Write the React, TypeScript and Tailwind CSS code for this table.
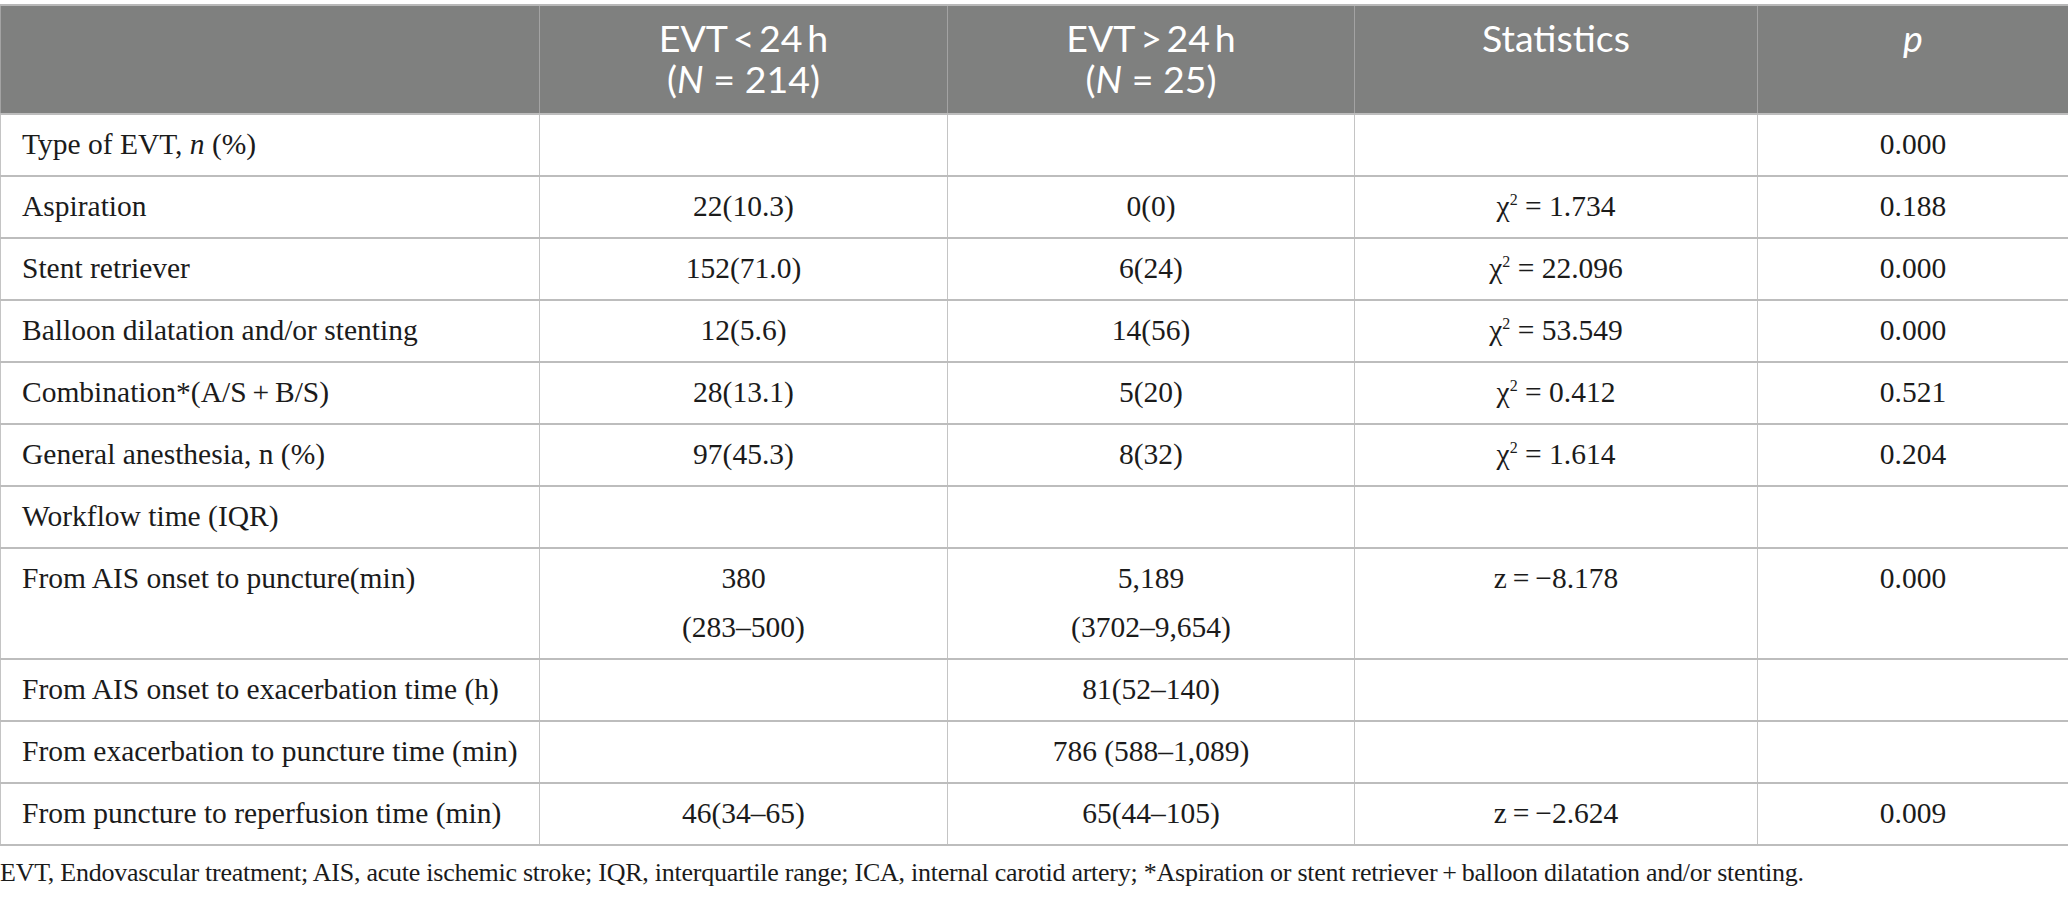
import React from "react";

type Cell = React.ReactNode;

const Chi = ({ v }: { v: string }) => (
  <span>
    χ<sup className="text-[16px] -top-[0.7em]">2</sup> = {v}
  </span>
);

const rows: { cells: Cell[]; tall?: boolean }[] = [
  { cells: [<span key="a">Type of EVT, <i>n</i> (%)</span>, "", "", "", "0.000"] },
  { cells: ["Aspiration", "22(10.3)", "0(0)", <Chi key="c" v="1.734" />, "0.188"] },
  { cells: ["Stent retriever", "152(71.0)", "6(24)", <Chi key="c" v="22.096" />, "0.000"] },
  { cells: ["Balloon dilatation and/or stenting", "12(5.6)", "14(56)", <Chi key="c" v="53.549" />, "0.000"] },
  { cells: ["Combination*(A/S\u2009+\u2009B/S)", "28(13.1)", "5(20)", <Chi key="c" v="0.412" />, "0.521"] },
  { cells: ["General anesthesia, n (%)", "97(45.3)", "8(32)", <Chi key="c" v="1.614" />, "0.204"] },
  { cells: ["Workflow time (IQR)", "", "", "", ""] },
  {
    tall: true,
    cells: [
      "From AIS onset to puncture(min)",
      <span key="b" className="block">380<br />(283–500)</span>,
      <span key="c" className="block">5,189<br />(3702–9,654)</span>,
      "z\u2009=\u2009−8.178",
      "0.000",
    ],
  },
  { cells: ["From AIS onset to exacerbation time (h)", "", "81(52–140)", "", ""] },
  { cells: ["From exacerbation to puncture time (min)", "", "786 (588–1,089)", "", ""] },
  { cells: ["From puncture to reperfusion time (min)", "46(34–65)", "65(44–105)", "z\u2009=\u2009−2.624", "0.009"] },
];

export default function App() {
  const serif = "font-['Liberation_Serif','Times_New_Roman',serif]";
  return (
    <div className="w-[2068px] bg-white pt-[4px]">
      <table className={`w-[2068px] table-fixed border-collapse ${serif} text-[#1b1b1b]`}>
        <colgroup>
          <col className="w-[539px]" />
          <col className="w-[408px]" />
          <col className="w-[407px]" />
          <col className="w-[403px]" />
          <col className="w-[311px]" />
        </colgroup>
        <thead>
          <tr className="h-[109px] bg-[#7f807f] text-white font-['Lato','Open_Sans',sans-serif] text-[37.5px] leading-[41px]">
            <th className="border border-t-2 border-[#b8b8b8] border-x-[#a3a3a3] align-top font-normal"></th>
            <th className="border border-t-2 border-[#b8b8b8] border-x-[#a3a3a3] align-top pt-[11px] font-normal text-center">
              EVT&thinsp;&lt;&thinsp;24&thinsp;h
              <br />(<i>N</i> = 214)
            </th>
            <th className="border border-t-2 border-[#b8b8b8] border-x-[#a3a3a3] align-top pt-[11px] font-normal text-center">
              EVT&thinsp;&gt;&thinsp;24&thinsp;h
              <br />(<i>N</i> = 25)
            </th>
            <th className="border border-t-2 border-[#b8b8b8] border-x-[#a3a3a3] align-top pt-[11px] font-normal text-center">
              Statistics
            </th>
            <th className="border border-t-2 border-[#b8b8b8] border-x-[#a3a3a3] align-top pt-[11px] font-normal text-center">
              <i>p</i>
            </th>
          </tr>
        </thead>
        <tbody className="text-[29.5px] leading-[49px]">
          {rows.map((r, i) => (
            <tr key={i} className={r.tall ? "h-[111px]" : "h-[62px]"}>
              {r.cells.map((c, j) => (
                <td
                  key={j}
                  className={`border-x border-y-2 border-[#bdbdbd] border-x-[#c4c4c4] align-top pt-[5px] pb-0 ${
                    j === 0 ? "pl-[21px] text-left" : "text-center"
                  }`}
                >
                  {c}
                </td>
              ))}
            </tr>
          ))}
        </tbody>
      </table>
      <p className={`${serif} text-[26px] leading-[36px] mt-[9px] text-[#1b1b1b] tracking-[-0.25px]`}>
        EVT, Endovascular treatment; AIS, acute ischemic stroke; IQR, interquartile range; ICA, internal carotid artery; *Aspiration or stent retriever&thinsp;+&thinsp;balloon dilatation and/or stenting.
      </p>
    </div>
  );
}
